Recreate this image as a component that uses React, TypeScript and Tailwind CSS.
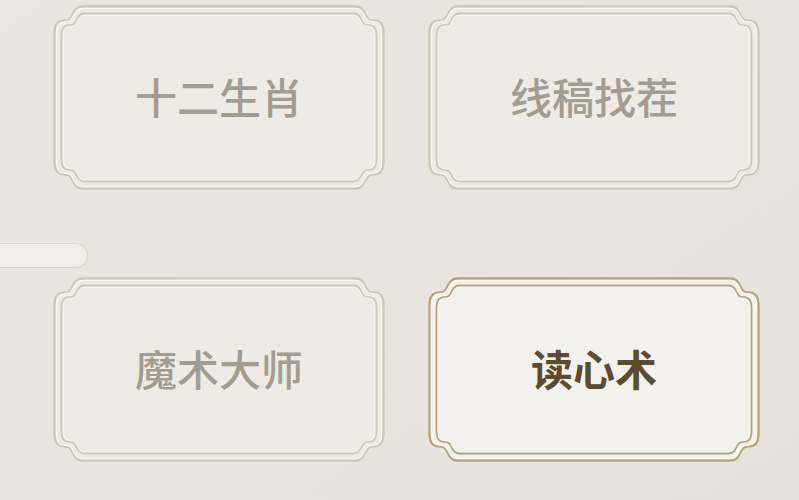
import React from 'react';

type Game = { title: string; active?: boolean };

const games: Game[] = [
  { title: '十二生肖' },
  { title: '线稿找茬' },
  { title: '魔术大师' },
  { title: '读心术', active: true },
];

const W = 332;
const H = 185;

// frame outline with stepped "ruyi" corners
function framePath(i: number, n: number) {
  const r = W - i;
  const b = H - i;
  const s = n * 0.5; // shelf depth
  return [
    `M ${i + n} ${i}`,
    `L ${r - n} ${i}`,
    `C ${r - n * 0.6} ${i} ${r - n * 0.7} ${i + s} ${r - n * 0.42} ${i + s}`,
    `C ${r - n * 0.12} ${i + s} ${r} ${i + n * 0.6} ${r} ${i + n}`,
    `L ${r} ${b - n}`,
    `C ${r} ${b - n * 0.6} ${r - n * 0.12} ${b - s} ${r - n * 0.42} ${b - s}`,
    `C ${r - n * 0.7} ${b - s} ${r - n * 0.6} ${b} ${r - n} ${b}`,
    `L ${i + n} ${b}`,
    `C ${i + n * 0.6} ${b} ${i + n * 0.7} ${b - s} ${i + n * 0.42} ${b - s}`,
    `C ${i + n * 0.12} ${b - s} ${i} ${b - n * 0.6} ${i} ${b - n}`,
    `L ${i} ${i + n}`,
    `C ${i} ${i + n * 0.6} ${i + n * 0.12} ${i + s} ${i + n * 0.42} ${i + s}`,
    `C ${i + n * 0.7} ${i + s} ${i + n * 0.6} ${i} ${i + n} ${i}`,
    'Z',
  ].join(' ');
}

function Frame({ active }: { active?: boolean }) {
  const line = active ? '#b7a180' : '#d2c7b7';
  const fill = active ? '#f3f1ec' : '#eeeae4';
  return (
    <svg
      className="absolute inset-0 h-full w-full"
      viewBox={`0 0 ${W} ${H}`}
      fill="none"
    >
      <path d={framePath(1.5, 28)} fill={fill} stroke={line} strokeWidth={2.4} />
      <path d={framePath(3.4, 26)} stroke="#fbfaf7" strokeWidth={1.1} opacity={0.85} />
      <path d={framePath(8.5, 23)} stroke={line} strokeWidth={1.8} />
      <path d={framePath(10.2, 21.5)} stroke="#fbfaf7" strokeWidth={0.9} opacity={0.75} />
    </svg>
  );
}

function GameCard({ game }: { game: Game }) {
  return (
    <div className="relative flex h-[185px] w-[332px] items-center justify-center pb-[5px]">
      <Frame active={game.active} />
      <span
        className={
          game.active
            ? 'relative text-[42px] font-semibold text-[#5c4c2f]'
            : 'relative text-[42px] font-medium text-[#a39d91]'
        }
        style={{ fontFamily: '"Noto Sans CJK SC", "Noto Sans", sans-serif' }}
      >
        {game.title}
      </span>
    </div>
  );
}

export default function App() {
  return (
    <div className="flex h-[500px] w-[799px] flex-col overflow-hidden bg-gradient-to-br from-[#ebe6df] via-[#e9e4dd] to-[#e6e1da]">
      <div className="flex gap-x-[43px] pl-[53px] pt-[5px]">
        <GameCard game={games[0]} />
        <GameCard game={games[1]} />
      </div>

      <div className="h-[87px] pt-[53px]">
        <div className="h-[25px] w-[88px] rounded-r-full border border-l-0 border-[#dad2c7] bg-[#f0ece6]" />
      </div>

      <div className="flex gap-x-[43px] pl-[53px]">
        <GameCard game={games[2]} />
        <GameCard game={games[3]} />
      </div>
    </div>
  );
}
